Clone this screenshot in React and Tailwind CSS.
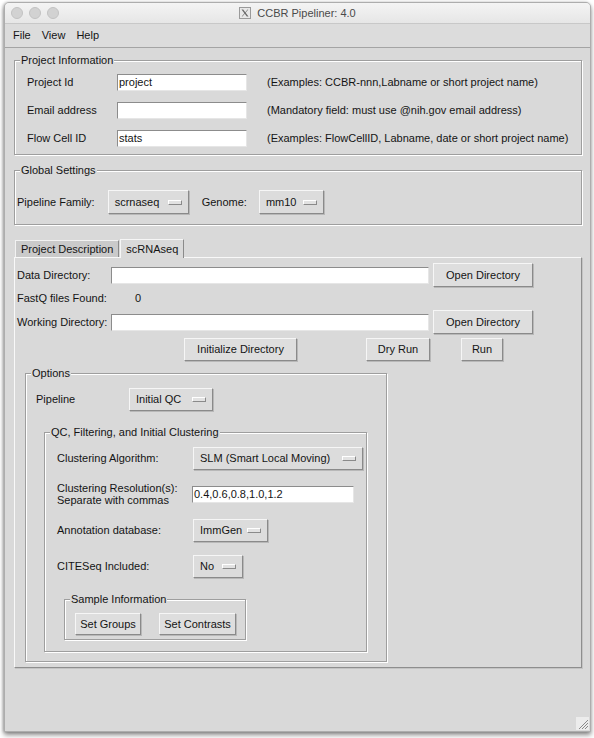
import React from "react";

const BG = "bg-[#d9d9d9]";

function Frame({ label, className = "", children }) {
  return (
    <div className={"relative border border-[#9e9e9e] shadow-[inset_1px_1px_0_#fff,1px_1px_0_#fff] " + className}>
      <span className="absolute left-[5px] top-[-7px] px-[1px] bg-[#d9d9d9] leading-[13px] whitespace-nowrap">{label}</span>
      {children}
    </div>
  );
}

function Drop({ label, className = "" }) {
  return (
    <div className={"flex items-center justify-between pl-[6px] pr-[6px] bg-[#dcdcdc] border border-t-[#f6f6f6] border-l-[#f6f6f6] border-b-[#8a8a8a] border-r-[#8a8a8a] shadow-[1px_1px_0_#b8b8b8] " + className}>
      <span className="whitespace-nowrap">{label}</span>
      <span className="w-[14px] h-[5px] bg-[#e2e2e2] border border-t-white border-l-white border-b-[#8a8a8a] border-r-[#8a8a8a]" />
    </div>
  );
}

function Btn({ label, className = "" }) {
  return (
    <div className={"flex items-center justify-center bg-[#dedede] border border-t-[#f6f6f6] border-l-[#f6f6f6] border-b-[#8a8a8a] border-r-[#8a8a8a] shadow-[1px_1px_0_#b8b8b8] whitespace-nowrap " + className}>
      {label}
    </div>
  );
}

function Input({ value = "", className = "" }) {
  return (
    <div className={"h-[17px] bg-white border border-t-[#8c8c8c] border-l-[#8c8c8c] border-b-[#e6e6e6] border-r-[#e6e6e6] pl-[1px] leading-[15px] whitespace-nowrap " + className}>
      {value}
    </div>
  );
}

function XLogo() {
  return (
    <svg width="12" height="12" viewBox="0 0 12 12">
      <rect x="0.5" y="0.5" width="11" height="11" fill="#e8e8e8" stroke="#9a9a9a" />
      <path d="M2.5 2.5 L4.2 2.5 L9.5 9.5 L7.8 9.5 Z" fill="#6a6a6a" />
      <path d="M9.3 2.5 L8.6 2.5 L2.7 9.5 L3.4 9.5 Z" fill="#6a6a6a" />
    </svg>
  );
}

export default function App() {
  return (
    <div className="w-[594px] h-[738px] bg-white pt-[2px] pl-[4px] font-['Liberation_Sans',Arial,sans-serif] text-[11px] text-[#141414]">
      <div className={"w-[587px] h-[730px] flex flex-col border border-[#adadad] rounded-t-[5px] overflow-hidden shadow-[0_3px_5px_rgba(0,0,0,0.45),-1px_0_3px_rgba(0,0,0,0.2)] " + BG}>
        {/* Title bar */}
        <div className="h-[20px] grid grid-cols-[1fr_auto_1fr] items-center bg-gradient-to-b from-[#f4f4f4] to-[#e6e6e6]">
          <div className="flex items-center gap-[6px] pl-[6px]">
            <span className="w-[12px] h-[12px] rounded-full bg-[#d2d2d2] border border-[#c2c2c2]" />
            <span className="w-[12px] h-[12px] rounded-full bg-[#d2d2d2] border border-[#c2c2c2]" />
            <span className="w-[12px] h-[12px] rounded-full bg-[#d2d2d2] border border-[#c2c2c2]" />
          </div>
          <div className="flex items-center gap-[6px] text-[#4a4a4a]">
            <XLogo />
            <span>CCBR Pipeliner: 4.0</span>
          </div>
          <div />
        </div>
        {/* Menu bar */}
        <div className="h-[25px] flex items-center gap-[11px] pl-[8px] bg-[#dcdcdc] border-t border-t-[#c8c8c8] border-b border-b-[#a4a4a4]">
          <span>File</span>
          <span>View</span>
          <span>Help</span>
        </div>

        {/* Content */}
        <div className="flex flex-col pl-[9px] pr-[8px]">
          {/* Project Information */}
          <Frame label="Project Information" className="mt-[12px] pt-[13px] pb-[7px] pl-[12px] flex flex-col gap-[11px]">
            {[
              ["Project Id", "project", "(Examples: CCBR-nnn,Labname or short project name)"],
              ["Email address", "", "(Mandatory field: must use @nih.gov email address)"],
              ["Flow Cell ID", "stats", "(Examples: FlowCellID, Labname, date or short project name)"],
            ].map(([l, v, h]) => (
              <div key={l} className="flex items-center h-[17px]">
                <span className="w-[90px]">{l}</span>
                <Input value={v} className="w-[130px]" />
                <span className="ml-[20px] whitespace-nowrap">{h}</span>
              </div>
            ))}
          </Frame>

          {/* Global Settings */}
          <Frame label="Global Settings" className="mt-[15px] pt-[19px] pb-[10px] pl-[2px] flex items-center">
            <span>Pipeline Family:</span>
            <Drop label="scrnaseq" className="ml-[13px] w-[81px] h-[24px]" />
            <span className="ml-[13px]">Genome:</span>
            <Drop label="mm10" className="ml-[12px] w-[65px] h-[24px]" />
          </Frame>

          {/* Tabs */}
          <div className="mt-[13px] flex items-end h-[19px] pl-[1px]">
            <div className="h-[17px] flex items-center px-[5px] bg-[#cacaca] border border-t-[#f2f2f2] border-l-[#f2f2f2] border-r-[#8a8a8a] border-b-0">Project Description</div>
            <div className="h-[19px] ml-[1px] flex items-center px-[5px] bg-[#d9d9d9] border border-t-[#f6f6f6] border-l-[#f6f6f6] border-r-[#8a8a8a] border-b-0 -mb-[1px] relative">scRNAseq</div>
          </div>
          <div className="h-[411px] border border-t-[#f8f8f8] border-l-[#f8f8f8] border-r-[#8e8e8e] border-b-[#8e8e8e] shadow-[1px_1px_0_#c4c4c4] pt-[5px] pl-[2px] flex flex-col">
            <div className="flex items-center h-[24px]">
              <span className="w-[94px]">Data Directory:</span>
              <Input className="w-[318px]" />
              <Btn label="Open Directory" className="ml-[4px] w-[100px] h-[24px]" />
            </div>
            <div className="flex items-center h-[22px]">
              <span className="w-[118px]">FastQ files Found:</span>
              <span>0</span>
            </div>
            <div className="flex items-center h-[24px] mt-[1px]">
              <span className="w-[94px]">Working Directory:</span>
              <Input className="w-[318px]" />
              <Btn label="Open Directory" className="ml-[4px] w-[100px] h-[24px]" />
            </div>
            <div className="flex items-center h-[23px] mt-[4px]">
              <Btn label="Initialize Directory" className="ml-[167px] w-[113px] h-[23px]" />
              <Btn label="Dry Run" className="ml-[69px] w-[64px] h-[23px]" />
              <Btn label="Run" className="ml-[31px] w-[42px] h-[23px]" />
            </div>

            {/* Options */}
            <Frame label="Options" className="mt-[12px] ml-[8px] w-[362px] pt-[14px] pb-[9px] pl-[10px] pr-[19px] flex flex-col">
              <div className="flex items-center h-[23px]">
                <span className="w-[93px]">Pipeline</span>
                <Drop label="Initial QC" className="w-[84px] h-[23px]" />
              </div>
              <Frame label="QC, Filtering, and Initial Clustering" className="mt-[21px] ml-[8px] pt-[14px] pb-[11px] pl-[12px] flex flex-col">
                <div className="flex items-center h-[23px]">
                  <span className="w-[136px]">Clustering Algorithm:</span>
                  <Drop label="SLM (Smart Local Moving)" className="w-[170px] h-[23px]" />
                </div>
                <div className="flex items-center h-[24px] mt-[12px]">
                  <span className="w-[135px] leading-[12px]">Clustering Resolution(s):<br />Separate with commas</span>
                  <Input value="0.4,0.6,0.8,1.0,1.2" className="w-[162px]" />
                </div>
                <div className="flex items-center h-[23px] mt-[13px]">
                  <span className="w-[136px]">Annotation database:</span>
                  <Drop label="ImmGen" className="w-[75px] h-[23px]" />
                </div>
                <div className="flex items-center h-[23px] mt-[13px]">
                  <span className="w-[136px]">CITESeq Included:</span>
                  <Drop label="No" className="w-[50px] h-[23px]" />
                </div>
                <Frame label="Sample Information" className="mt-[21px] ml-[7px] w-[182px] pt-[13px] pb-[4px] pl-[10px] flex items-center">
                  <Btn label="Set Groups" className="w-[66px] h-[22px]" />
                  <Btn label="Set Contrasts" className="ml-[18px] w-[77px] h-[22px]" />
                </Frame>
              </Frame>
            </Frame>
          </div>
        </div>

        {/* Resize grip */}
        <div className="mt-auto flex justify-end pr-[1px] pb-[1px]">
          <svg width="13" height="13" viewBox="0 0 13 13">
            <rect width="13" height="13" fill="#ececec" />
            <path d="M3 12 L12 3 M6 12 L12 6 M9 12 L12 9" stroke="#8a8a8a" strokeWidth="1" />
          </svg>
        </div>
      </div>
    </div>
  );
}
